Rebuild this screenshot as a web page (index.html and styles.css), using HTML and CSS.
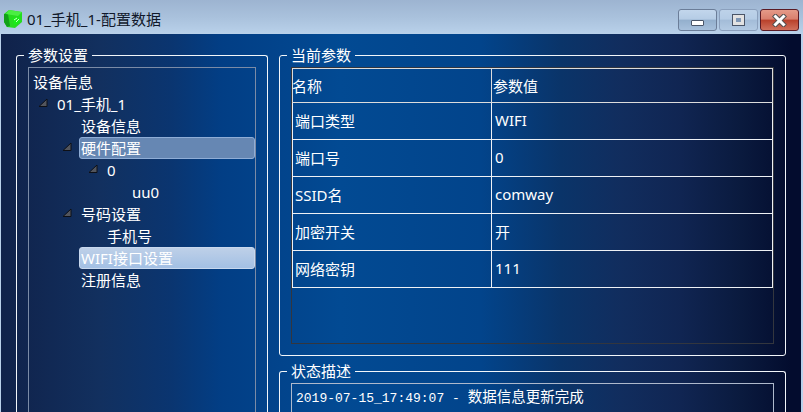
FILE: index.html

```html
<!DOCTYPE html>
<html>
<head>
    <title>01_手机_1-配置数据</title>
    <meta charset="UTF-8">
    <link rel="stylesheet" href="styles.css">
</head>
<body>
    <svg class="defs" width="0" height="0">
        <symbol id="tree-arrow" viewBox="0 0 10 10">
            <path d="M9 1 L9 8.5 L1 8.5 Z" fill="#52555d" stroke="#0e1016" stroke-width="1"/>
        </symbol>
    </svg>
    <div class="window">
        <div class="titlebar">
            <svg class="app-icon" width="20" height="20" viewBox="0 0 20 20">
                <path d="M1 5 L6 1 L19 3 L19 13 L12 19 L4 18 L1 13 Z" fill="#25dc1e"/>
                <path d="M1 5 L5 5 L7 17 L4 18 L1 13 Z" fill="#12a018"/>
                <path d="M6 1 L19 3 L15 7 L3 5 Z" fill="#4aee42"/>
                <path d="M10 9 L17 8 L17 13 L11 16 Z" fill="#18ee18"/>
                <path d="M11 11 L14 9 M13 13 L16 10" stroke="#d4ffcc" stroke-width="1"/>
            </svg>
            <span class="title-text">01_手机_1-配置数据</span>
            <div class="win-buttons">
                <div class="win-btn"><span class="min-glyph"></span></div>
                <div class="win-btn faded"><span class="max-glyph"></span></div>
                <div class="win-btn close">
                    <svg width="15" height="13" viewBox="0 0 15 13">
                        <path d="M3.5 2.5 L11.5 10.5 M11.5 2.5 L3.5 10.5" stroke="#55504f" stroke-width="5" stroke-linecap="square"/>
                        <path d="M3.5 2.5 L11.5 10.5 M11.5 2.5 L3.5 10.5" stroke="#fff" stroke-width="3" stroke-linecap="square"/>
                    </svg>
                </div>
            </div>
        </div>

        <div class="client">
            <fieldset class="group group-left">
                <legend>参数设置</legend>
                <div class="tree">
                    <div class="tree-row lv0">设备信息</div>
                    <div class="tree-row lv1"><svg class="arrow"><use href="#tree-arrow"/></svg>01_手机_1</div>
                    <div class="tree-row lv2">设备信息</div>
                    <div class="tree-row lv2 selected-dim"><svg class="arrow"><use href="#tree-arrow"/></svg>硬件配置</div>
                    <div class="tree-row lv3"><svg class="arrow"><use href="#tree-arrow"/></svg>0</div>
                    <div class="tree-row lv4">uu0</div>
                    <div class="tree-row lv2"><svg class="arrow"><use href="#tree-arrow"/></svg>号码设置</div>
                    <div class="tree-row lv3">手机号</div>
                    <div class="tree-row lv2 selected">WIFI接口设置</div>
                    <div class="tree-row lv2">注册信息</div>
                </div>
            </fieldset>

            <div class="right-col">
                <fieldset class="group group-params">
                    <legend>当前参数</legend>
                    <div class="table-box">
                        <table class="param-table">
                            <tr class="head"><th>名称</th><th>参数值</th></tr>
                            <tr><td>端口类型</td><td>WIFI</td></tr>
                            <tr><td>端口号</td><td>0</td></tr>
                            <tr><td>SSID名</td><td>comway</td></tr>
                            <tr><td>加密开关</td><td>开</td></tr>
                            <tr><td>网络密钥</td><td>111</td></tr>
                        </table>
                    </div>
                </fieldset>
                <fieldset class="group group-status">
                    <legend>状态描述</legend>
                    <div class="status-box">2019-07-15_17:49:07 - <span class="status-cjk">数据信息更新完成</span></div>
                </fieldset>
            </div>
        </div>
    </div>
</body>
</html>
```

FILE: styles.css

```css
html, body { margin: 0; padding: 0; height: 100%; overflow: hidden; }
body { font-family: "Noto Sans", "Noto Sans CJK SC", sans-serif; font-size: 15px; color: #fff; }
.defs { position: absolute; }

.window { width: 803px; height: 412px; display: flex; flex-direction: column; background: #b9d1ea; }

.titlebar {
    height: 34px;
    flex: none;
    display: flex;
    align-items: center;
    padding: 0 4px 0 3px;
    background: linear-gradient(180deg, #9db4d1 0%, #a9c1dc 50%, #b9d1ea 100%);
    box-sizing: border-box;
}
.app-icon { flex: none; margin: 4px 4px 0 0; }
.title-text { font-size: 15px; color: #10182a; padding-top: 3px; }
.win-buttons { margin-left: auto; display: flex; gap: 2px; align-self: flex-start; margin-top: 9px; }

.win-btn {
    width: 39px;
    height: 22px;
    box-sizing: border-box;
    border: 1px solid #6b7d98;
    border-radius: 3px;
    display: flex;
    justify-content: center;
    padding-top: 4px;
    background: linear-gradient(180deg, #c2d6ec 0%, #b5cce5 46%, #93afcd 50%, #a7c0dc 100%);
}
.win-btn.faded { border-color: #8ba0bd; background: linear-gradient(180deg, #bdd2e9 0%, #b5cce5 46%, #a3bcd8 50%, #b3cae3 100%); }
.win-btn.close {
    border-color: #5a1a24;
    background: linear-gradient(180deg, #e59a88 0%, #d97f6d 46%, #b9402a 50%, #d0705c 100%);
}
.min-glyph { width: 11px; height: 4px; margin-top: 6px; background: #fff; border: 1px solid #4a5568; border-radius: 1px; }
.max-glyph { width: 5px; height: 4px; margin-top: 1px; border: 3px solid #e2e2e2; box-shadow: 0 0 0 1px #4a5568; background: #7f97b5; }

.client {
    flex: 1;
    min-height: 0;
    margin: 0 2px 0 1px;
    padding: 13px 0 0 15px;
    box-sizing: border-box;
    display: flex;
    gap: 11px;
    background: linear-gradient(90deg, #10224a 0px, #12305f 100px, #0a3570 170px, #023e85 220px, #024a93 340px, #02448b 480px, #0a3469 560px, #112d5e 620px, #102552 680px, #0a1a3e 740px, #030c2e 790px);
}

.group {
    margin: 0;
    padding: 4px 11px 0;
    border: 1px solid #f2f6fa;
    border-radius: 3px;
    min-width: 0;
    box-sizing: border-box;
    flex: none;
}
.group legend {
    margin-left: -4px;
    padding: 0 4px;
    font-size: 15px;
    line-height: 16px;
    color: #fff;
}

.group-left { width: 252px; height: 365px; border-bottom: none; border-radius: 3px 3px 0 0; }
.tree {
    height: 345px;
    border: 1px solid #7b8ba6;
    border-bottom: none;
    box-sizing: border-box;
    padding-top: 3px;
}
.tree-row {
    height: 22px;
    line-height: 22px;
    position: relative;
    white-space: nowrap;
}
.lv0 { padding-left: 4px; }
.lv1 { padding-left: 28px; }
.lv2 { padding-left: 52px; }
.lv3 { padding-left: 78px; }
.lv4 { padding-left: 103px; }

.arrow {
    position: absolute;
    width: 10px;
    height: 10px;
    margin-left: -19px;
    top: 5px;
}

.selected, .selected-dim { margin-left: 50px; padding-left: 1px; box-sizing: border-box; border-radius: 3px; line-height: 20px; border: 1px solid; }
.selected-dim { background: #6687b3; border-color: #8fadd6; }
.selected { background: linear-gradient(180deg, #bed0e8, #a3c0e4); border-color: #c8d8ee; }
.selected-dim .arrow { margin-left: -19px; top: 4px; }

.right-col { width: 507px; display: flex; flex-direction: column; gap: 7px; flex: none; }
.group-params { height: 309px; }
.table-box {
    height: 277px;
    box-sizing: border-box;
    border: 1px solid #33363e;
}
.param-table { width: 481px; border-collapse: collapse; table-layout: fixed; }
.param-table th, .param-table td {
    border: 1px solid #eef1f5;
    font-weight: normal;
    text-align: left;
    height: 37px;
    padding: 0 3px 2px;
    box-sizing: border-box;
}
.param-table td:first-child { padding-left: 2px; }
.param-table th { padding: 0 0 0 1px; height: 34px; border-color: #dcdcdc; }
.param-table th:first-child { padding-left: 0; text-indent: -1px; }
.param-table th:first-child, .param-table td:first-child { width: 199px; }

.group-status { height: 49px; border-bottom: none; border-radius: 3px 3px 0 0; }
.status-box {
    height: 29px;
    border: 1px solid #aeb9cc;
    border-bottom: none;
    box-sizing: border-box;
    padding: 6px 4px 0;
    font-family: "Liberation Mono", "Noto Sans CJK SC", monospace;
    font-size: 13px;
    line-height: 16px;
    white-space: nowrap;
}
.status-cjk { font-size: 14.5px; }
```
